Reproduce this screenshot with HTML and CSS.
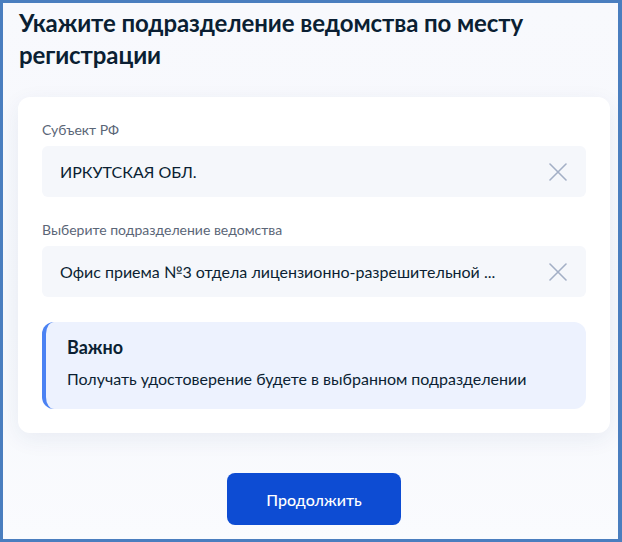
FILE: index.html
```html
<!DOCTYPE html>
<html lang="ru">
<head>
<meta charset="utf-8">
<title>Подразделение</title>
<link rel="stylesheet" href="styles.css">
</head>
<body>
<div class="frame">
  <div class="content">
    <h1 class="title">Укажите подразделение ведомства по месту регистрации</h1>
    <div class="card">
      <div class="field">
        <div class="label">Субъект РФ</div>
        <div class="input">
          <span class="value">ИРКУТСКАЯ ОБЛ.</span>
          <svg class="clear" width="18" height="18" viewBox="0 0 18 18"><path d="M1 1L17 17M17 1L1 17" stroke="#a3afc6" stroke-width="1.6" fill="none" stroke-linecap="round"/></svg>
        </div>
      </div>
      <div class="field">
        <div class="label">Выберите подразделение ведомства</div>
        <div class="input">
          <span class="value">Офис приема №3 отдела лицензионно-разрешительной ...</span>
          <svg class="clear" width="18" height="18" viewBox="0 0 18 18"><path d="M1 1L17 17M17 1L1 17" stroke="#a3afc6" stroke-width="1.6" fill="none" stroke-linecap="round"/></svg>
        </div>
      </div>
      <div class="note">
        <div class="note-title">Важно</div>
        <div class="note-text">Получать удостоверение будете в выбранном подразделении</div>
      </div>
    </div>
    <div class="actions">
      <button class="btn">Продолжить</button>
    </div>
  </div>
</div>
</body>
</html>
```
FILE: styles.css
```css
html, body {
  margin: 0;
  padding: 0;
}
body {
  width: 622px;
  height: 542px;
  font-family: Lato, "Noto Sans", sans-serif;
  color: #0b1f33;
}
.frame {
  box-sizing: border-box;
  width: 622px;
  height: 542px;
  border: 3px solid #4a7ebf;
  border-right-width: 4px;
  background: linear-gradient(180deg, #f8f9fd 0%, #f6f8fc 60%, #fafbfe 100%);
  overflow: hidden;
}
.content {
  margin-left: 15px;
  width: 592px;
}
.title {
  margin: 4px 0 0 1px;
  font-size: 24px;
  line-height: 32px;
  font-weight: 700;
  color: #0b1f33;
  letter-spacing: -0.1px;
}
.card {
  margin-top: 26px;
  background: #ffffff;
  border-radius: 12px;
  box-shadow: 0 6px 22px rgba(30, 60, 120, 0.07);
  padding: 23px 24px 24px;
  display: flex;
  flex-direction: column;
  gap: 23px;
}
.field {
  display: flex;
  flex-direction: column;
  gap: 6px;
}
.label {
  font-size: 14px;
  line-height: 20px;
  color: #5b6677;
}
.input {
  height: 51px;
  background: #f5f7fb;
  border-radius: 6px;
  display: flex;
  align-items: center;
  justify-content: space-between;
  padding: 0 19px 0 18px;
}
.value {
  font-size: 16px;
  line-height: 24px;
  color: #0b1f33;
  white-space: nowrap;
}
.clear {
  flex: none;
}
.note {
  margin-top: 2px;
  background: #edf2fe;
  border-left: 4px solid #4b82f3;
  border-radius: 12px;
  padding: 13px 20px 18px 21px;
}
.note-title {
  font-size: 18px;
  line-height: 24px;
  font-weight: 700;
  color: #0b1f33;
}
.note-text {
  margin-top: 8px;
  font-size: 16px;
  line-height: 24px;
  color: #0b1f33;
}
.actions {
  margin-top: 40px;
  display: flex;
  justify-content: center;
}
.btn {
  width: 174px;
  height: 52px;
  border: none;
  border-radius: 8px;
  background: #0d4cd3;
  color: #ffffff;
  font-family: Lato, "Noto Sans", sans-serif;
  font-size: 16px;
  font-weight: 500;
}
```
